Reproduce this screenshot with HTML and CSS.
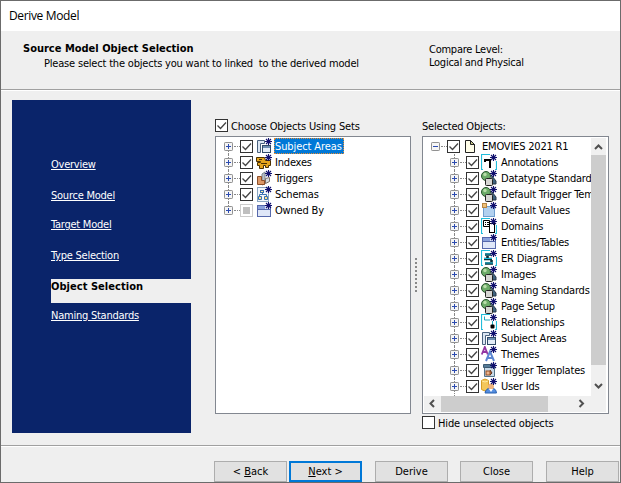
FILE: index.html
```html
<!DOCTYPE html>
<html lang="en">
<head>
<meta charset="utf-8">
<title>Derive Model</title>
<link rel="stylesheet" href="styles.css">
</head>
<body>
<svg class="defs" width="0" height="0" aria-hidden="true">
  <symbol id="star" viewBox="0 0 16 16"><path d="M12.500 0v7M9 3.500h7M10 1l5 5M15 1l-5 5" stroke="#10106e" stroke-width="1.100" fill="none"/></symbol>
  <symbol id="check" viewBox="0 0 13 13"><rect x=".5" y=".5" width="12" height="12" fill="#fff" stroke="#333"/><path d="M2.500 6.500l3 3L11 3.500" fill="none" stroke="#444" stroke-width="1.300"/></symbol>
  <symbol id="partial" viewBox="0 0 13 13"><rect x=".5" y=".5" width="12" height="12" fill="#fff" stroke="#ccc"/><rect x="3" y="3" width="7" height="7" fill="#bfbfbf"/></symbol>
  <symbol id="empty" viewBox="0 0 13 13"><rect x=".5" y=".5" width="12" height="12" fill="#fff" stroke="#333"/></symbol>
  <symbol id="plus" viewBox="0 0 9 9"><rect x=".5" y=".5" width="8" height="8" rx=".7" fill="#f5f5f5" stroke="#919191"/><path d="M2 4.500h5M4.500 2v5" stroke="#2c4bb0"/></symbol>
  <symbol id="minus" viewBox="0 0 9 9"><rect x=".5" y=".5" width="8" height="8" rx=".7" fill="#f5f5f5" stroke="#919191"/><path d="M2 4.500h5" stroke="#2c4bb0"/></symbol>
  <symbol id="page" viewBox="0 0 16 16"><path d="M3.500 2.500h5l4 4v8h-9z" fill="#fffde8" stroke="#222"/><path d="M8.500 2.500v4h4z" fill="#c9c98a" stroke="#222"/></symbol>
  <symbol id="areas" viewBox="0 0 16 16"><path d="M1.500 14.500v-12h7v3h-4v9z" fill="#dce6f2" stroke="#49617e"/><rect x="6.500" y="7.500" width="8" height="7" fill="#e3ecf7" stroke="#304a68"/><path d="M7 9h7" stroke="#6d8db0" stroke-width="2"/><use href="#star"/></symbol>
  <symbol id="indexes" viewBox="0 0 16 16"><path d="M.5 3.500h8l1 3h5v5h-2v2h-3v-2h-2v3h-4v-3h-2v-3h3v-1h-4z" fill="#e5a51e" stroke="#4a3000"/><path d="M3 5.500h3M5 9.500h6" stroke="#4a3000" stroke-width="1.200"/><use href="#star"/></symbol>
  <symbol id="triggers" viewBox="0 0 16 16"><path d="M6 4l3-2v12l-3 1z" fill="#b8c0c8" stroke="#7d8790"/><path d="M1.500 6.500h4v4h3v4h-7z" fill="#dc9867" stroke="#8d4f29"/><path d="M9.500 8.500l4-1v4l-4 2z" fill="#d6dbe0" stroke="#7d7068"/><use href="#star"/></symbol>
  <symbol id="schemas" viewBox="0 0 16 16"><rect x="1.500" y="1.500" width="11" height="14" fill="#f3f7fc" stroke="#8ba7c2"/><path d="M6.500 7v1.500h-3V10M6.500 8.500h4V10" fill="none" stroke="#3972b0"/><rect x="4.500" y="4.500" width="3" height="2" fill="#ffe9a0" stroke="#3972b0"/><path d="M2.500 10.500h3v3h-3zM8.500 10.500h3v3h-3z" fill="#ffe28b" stroke="#3972b0"/><use href="#star"/></symbol>
  <symbol id="table" viewBox="0 0 16 16"><rect x="1.500" y="3.500" width="13" height="11" fill="#dfe7f8" stroke="#5669ac"/><path d="M2 5.500h7" stroke="#8aa1db" stroke-width="3"/><path d="M2 7.500h12" stroke="#5669ac"/><use href="#star"/></symbol>
  <symbol id="frame" viewBox="0 0 16 16"><path d="M5 .5H.5v15H2M15.500 7v8.500H14M5 .5h4" fill="none" stroke="#22bddb" stroke-width="1.200"/></symbol>
  <symbol id="annotation" viewBox="0 0 16 16"><use href="#frame"/><path d="M4 6h5v8M4 8V5" fill="none" stroke="#000" stroke-width="2"/><use href="#star"/></symbol>
  <symbol id="shapes" viewBox="0 0 16 16"><circle cx="5" cy="6" r="4.500" fill="#6cab68" stroke="#28542d"/><circle cx="4" cy="4.500" r="1.700" fill="#b9dda9"/><path d="M11 6l4 5v3H10z" fill="#3f6480" stroke="#263749"/><rect x="4.500" y="8.500" width="7" height="7" rx="1" fill="#d6d6d3" stroke="#222"/><use href="#star"/></symbol>
  <symbol id="values" viewBox="0 0 16 16"><rect x="2.500" y="4.500" width="11" height="10" fill="#b1d0ef" stroke="#6f9ecf"/><rect x="1.500" y="1.500" width="4" height="4" fill="#eec07a" stroke="#b88744"/><use href="#star"/></symbol>
  <symbol id="domains" viewBox="0 0 16 16"><use href="#frame"/><path d="M2.500 2.500h6v6h-6zM4 4.500h1M6 4.500h2M4 6.500h1M6 6.500h2" fill="#fff" stroke="#000"/><rect x="8.500" y="5.500" width="5" height="9" fill="#fff" stroke="#000"/><use href="#star"/></symbol>
  <symbol id="diagram" viewBox="0 0 16 16"><use href="#frame"/><path d="M4 4.500h6M6.500 6v2M3 9h8M10.500 10v2M4 13.500h8" fill="none" stroke="#062f38" stroke-width="2.600"/><path d="M4 4h6M3 8.500h8M4 13h8" stroke="#16bddd"/><use href="#star"/></symbol>
  <symbol id="relation" viewBox="0 0 16 16"><use href="#frame"/><path d="M3.500 2.500V6h5.500M11.500 7v4" fill="none" stroke="#21a7bd"/><rect x="9.500" y="10.500" width="4" height="4" rx="1" fill="#000"/><use href="#star"/></symbol>
  <symbol id="themes" viewBox="0 0 16 16"><path d="M.8 8.500L3.800 1l3 7.500M2 6h4" fill="none" stroke="#9337a2" stroke-width="1.800"/><path d="M5 15l4-9.500L13 15M6.500 12h5" fill="none" stroke="#5b86d2" stroke-width="2"/><use href="#star"/></symbol>
  <symbol id="template" viewBox="0 0 16 16"><path d="M3.500 4.500h10v10h-10z" fill="#c8d9e7" stroke="#537389"/><path d="M2.500 2.500h10v3h-10z" fill="#547a96" stroke="#3c5a71"/><rect x="5" y="9" width="4" height="4" fill="#edb48b" stroke="#965026"/><path d="M9 8l2 3-2 2" fill="#a35e36" stroke="#61341e"/><use href="#star"/></symbol>
  <symbol id="user" viewBox="0 0 16 16"><path d="M.5 2.500Q4-.5 7.500 2.500v9Q4 14.500.5 11.500z" fill="#f4c75a" stroke="#d69e27"/><path d="M1 3q3 2 6 0" fill="none" stroke="#ffeaa3"/><path d="M4 15q1-5 6-5t5.500 5z" fill="#548ddf" stroke="#2860b0"/><circle cx="10" cy="8.500" r="3" fill="#efb47e"/><path d="M8 11l2 3 2-3" fill="#fff"/><use href="#star"/></symbol>
</svg>
<div class="window">
  <header class="titlebar">Derive Model</header>
  <section class="intro">
    <div class="intro-main"><h1>Source Model Object Selection</h1><p>Please select the objects you want to linked&nbsp; to the derived model</p></div>
    <div class="level">Compare Level:<br>Logical and Physical</div>
  </section>
  <main class="content">
    <nav class="steps">
      <a>Overview</a><a>Source Model</a><a>Target Model</a><a>Type Selection</a><b>Object Selection</b><a>Naming Standards</a>
    </nav>
    <section class="sets">
      <label class="caption checkline"><svg class="box"><use href="#check"/></svg><span>Choose Objects Using Sets</span></label>
      <div class="tree tree-left">
        <div class="row"><svg class="exp"><use href="#plus"/></svg><svg class="box"><use href="#check"/></svg><svg class="ico"><use href="#areas"/></svg><span class="selected">Subject Areas</span></div>
        <div class="row"><svg class="exp"><use href="#plus"/></svg><svg class="box"><use href="#check"/></svg><svg class="ico"><use href="#indexes"/></svg><span>Indexes</span></div>
        <div class="row"><svg class="exp"><use href="#plus"/></svg><svg class="box"><use href="#check"/></svg><svg class="ico"><use href="#triggers"/></svg><span>Triggers</span></div>
        <div class="row"><svg class="exp"><use href="#plus"/></svg><svg class="box"><use href="#check"/></svg><svg class="ico"><use href="#schemas"/></svg><span>Schemas</span></div>
        <div class="row"><svg class="exp"><use href="#plus"/></svg><svg class="box"><use href="#partial"/></svg><svg class="ico"><use href="#table"/></svg><span>Owned By</span></div>
      </div>
    </section>
    <div class="splitter"><i></i></div>
    <section class="objects">
      <div class="caption"><span>Selected Objects:</span></div>
      <div class="tree tree-right">
        <div class="items">
          <div class="row root"><svg class="exp"><use href="#minus"/></svg><svg class="box"><use href="#check"/></svg><svg class="ico"><use href="#page"/></svg><span>EMOVIES 2021 R1</span></div>
          <div class="row"><svg class="exp"><use href="#plus"/></svg><svg class="box"><use href="#check"/></svg><svg class="ico"><use href="#annotation"/></svg><span>Annotations</span></div>
          <div class="row"><svg class="exp"><use href="#plus"/></svg><svg class="box"><use href="#check"/></svg><svg class="ico"><use href="#shapes"/></svg><span>Datatype Standards</span></div>
          <div class="row"><svg class="exp"><use href="#plus"/></svg><svg class="box"><use href="#check"/></svg><svg class="ico"><use href="#shapes"/></svg><span>Default Trigger Templates</span></div>
          <div class="row"><svg class="exp"><use href="#plus"/></svg><svg class="box"><use href="#check"/></svg><svg class="ico"><use href="#values"/></svg><span>Default Values</span></div>
          <div class="row"><svg class="exp"><use href="#plus"/></svg><svg class="box"><use href="#check"/></svg><svg class="ico"><use href="#domains"/></svg><span>Domains</span></div>
          <div class="row"><svg class="exp"><use href="#plus"/></svg><svg class="box"><use href="#check"/></svg><svg class="ico"><use href="#table"/></svg><span>Entities/Tables</span></div>
          <div class="row"><svg class="exp"><use href="#plus"/></svg><svg class="box"><use href="#check"/></svg><svg class="ico"><use href="#diagram"/></svg><span>ER Diagrams</span></div>
          <div class="row"><svg class="exp"><use href="#plus"/></svg><svg class="box"><use href="#check"/></svg><svg class="ico"><use href="#shapes"/></svg><span>Images</span></div>
          <div class="row"><svg class="exp"><use href="#plus"/></svg><svg class="box"><use href="#check"/></svg><svg class="ico"><use href="#shapes"/></svg><span>Naming Standards</span></div>
          <div class="row"><svg class="exp"><use href="#plus"/></svg><svg class="box"><use href="#check"/></svg><svg class="ico"><use href="#shapes"/></svg><span>Page Setup</span></div>
          <div class="row"><svg class="exp"><use href="#plus"/></svg><svg class="box"><use href="#check"/></svg><svg class="ico"><use href="#relation"/></svg><span>Relationships</span></div>
          <div class="row"><svg class="exp"><use href="#plus"/></svg><svg class="box"><use href="#check"/></svg><svg class="ico"><use href="#areas"/></svg><span>Subject Areas</span></div>
          <div class="row"><svg class="exp"><use href="#plus"/></svg><svg class="box"><use href="#check"/></svg><svg class="ico"><use href="#themes"/></svg><span>Themes</span></div>
          <div class="row"><svg class="exp"><use href="#plus"/></svg><svg class="box"><use href="#check"/></svg><svg class="ico"><use href="#template"/></svg><span>Trigger Templates</span></div>
          <div class="row"><svg class="exp"><use href="#plus"/></svg><svg class="box"><use href="#check"/></svg><svg class="ico"><use href="#user"/></svg><span>User Ids</span></div>
        </div>
        <div class="vscroll"><svg viewBox="0 0 15 18"><path d="M4 11l3.500-3.500L11 11"/></svg><i></i><svg viewBox="0 0 15 18"><path d="M4 7l3.500 3.500L11 7"/></svg></div>
        <div class="hscroll"><svg viewBox="0 0 17 15"><path d="M10 4L6.500 7.500 10 11"/></svg><i></i><svg viewBox="0 0 17 15"><path d="M6.500 4L10 7.500 6.500 11"/></svg></div>
      </div>
      <label class="hide checkline"><svg class="box"><use href="#empty"/></svg><span>Hide unselected objects</span></label>
    </section>
  </main>
  <footer class="actions">
    <button>&lt; <u>B</u>ack</button><button class="primary"><u>N</u>ext &gt;</button><button>Derive</button><button>Close</button><button>Help</button>
  </footer>
</div>
</body>
</html>
```
FILE: styles.css
```css
* { box-sizing: border-box; }
body { margin: 0; font: 11px/13px "DejaVu Sans Condensed", "DejaVu Sans", sans-serif; letter-spacing: -.19px; color: #000; overflow: hidden; }
svg { display: block; flex: none; }
.defs { position: absolute; }
.window { width: 621px; height: 483px; border: 1px solid #6b6b6b; background: #efefef; display: grid; grid-template-rows: 30px 60px 355px 1fr; }
.titlebar { background: #fff; font: 12px/30px "Open Sans", sans-serif; letter-spacing: -.35px; padding-left: 8px; }
.intro { display: grid; grid-template-columns: 406px 1fr; padding: 11px 0 0 22px; border-bottom: 1px solid #fff; box-shadow: inset 0 -1px #a0a0a0; }
h1 { font-size: 11px; line-height: 13px; letter-spacing: 0; margin: 0; }
p { margin: 2px 0 0 21px; white-space: nowrap; }
.level { padding-top: 1px; letter-spacing: -.25px; }
.content { display: grid; grid-template-columns: 179px 24px 196px 11px 187px; padding: 9px 0 0 11px; border-bottom: 1px solid #a0a0a0; }
.steps { grid-column: 1; height: 333px; background: #0a246a; color: #fff; padding: 57px 0 0 39px; display: grid; grid-template-rows: 31px 29px 31px 31px 29px 20px; align-content: start; }
.steps a { text-decoration: underline; text-underline-offset: 1px; line-height: 15px; letter-spacing: -.24px; }
.steps b { background: #efefef; color: #000; height: 24px; line-height: 15px; letter-spacing: .04px; }
.sets { grid-column: 3; }
.caption { height: 36px; padding-top: 19px; }
.checkline span, .caption span { display: block; padding-top: 1px; height: 14px; }
.checkline { display: flex; gap: 3px; letter-spacing: -.15px; }
.box { width: 13px; height: 13px; }
.tree { height: 278px; background: #fff; border: 1px solid #828790; padding-top: 1px; }
.row { height: 16px; display: grid; grid-template-columns: 9px 13px 16px max-content; grid-template-rows: 16px; column-gap: 7px; padding-left: 8px; align-items: center; position: relative; white-space: nowrap; }
.row .ico { margin-left: -4px; }
.row span { margin-left: -9px; padding: 1px 1px 0; height: 16px; line-height: 15px; }
.row::before { content: ""; position: absolute; left: 12px; top: 0; height: 16px; border-left: 1px dotted #888; }
.row::after { content: ""; position: absolute; left: 18px; top: 8px; width: 6px; border-top: 1px dotted #888; }
.tree-left .row:first-child::before { top: 8px; height: 8px; }
.tree-left .row:last-child::before { height: 8px; }
.exp { width: 9px; height: 9px; position: relative; z-index: 1; }
.ico { width: 16px; height: 16px; }
.row .selected { background: #0078d7; color: #fff; width: 70px; letter-spacing: -.1px; outline: 1px dotted #e68c32; outline-offset: -1px; }
.splitter { grid-column: 4; padding: 158px 0 0 4px; }
.splitter i { display: block; width: 2px; height: 34px; background: repeating-linear-gradient(#888 0 2px, transparent 2px 4px); }
.objects { grid-column: 5; }
.tree-right { display: grid; grid-template-columns: 168px 15px; grid-template-rows: 258px 16px; padding: 1px 0 0 0; }
.tree-right .items { overflow: hidden; }
.tree-right .row { padding-left: 27px; }
.tree-right .row .ico { margin-left: -5px; }
.tree-right .row::before { left: 31px; }
.tree-right .row::after { left: 37px; }
.tree-right .row:last-child::before { height: 18px; }
.tree-right .root { padding-left: 8px; }
.tree-right .root::before { display: none; }
.tree-right .root::after { left: 18px; }
.vscroll { background: #f0f0f0; display: grid; grid-template-rows: 17px 210px 1fr; }
.vscroll svg { width: 15px; height: 18px; }
.vscroll svg:last-child { margin-top: 12px; }
.vscroll i, .hscroll i { background: #cdcdcd; }
.hscroll { grid-column: 1 / 3; background: #f0f0f0; display: grid; grid-template-columns: 17px 107px 1fr; height: 16px; margin-left: 1px; }
.hscroll svg { width: 17px; height: 15px; }
.hscroll svg:last-child { margin-left: 25px; }
.vscroll path, .hscroll path { fill: none; stroke: #505050; stroke-width: 2; }
.tree-right .root span { margin-left: -9px; }
.hide { margin-top: 2px; }
.actions { display: grid; grid-template-columns: 75px 86px 85px 86px 73px; padding: 14px 0 0 213px; border-top: 1px solid #fff; height: 36px; letter-spacing: 0; }
button { width: 73px; height: 21px; padding: 0; border: 1px solid #adadad; background: #e1e1e1; font: inherit; letter-spacing: 0; color: #000; }
button.primary { border: 2px solid #0078d7; }
```
